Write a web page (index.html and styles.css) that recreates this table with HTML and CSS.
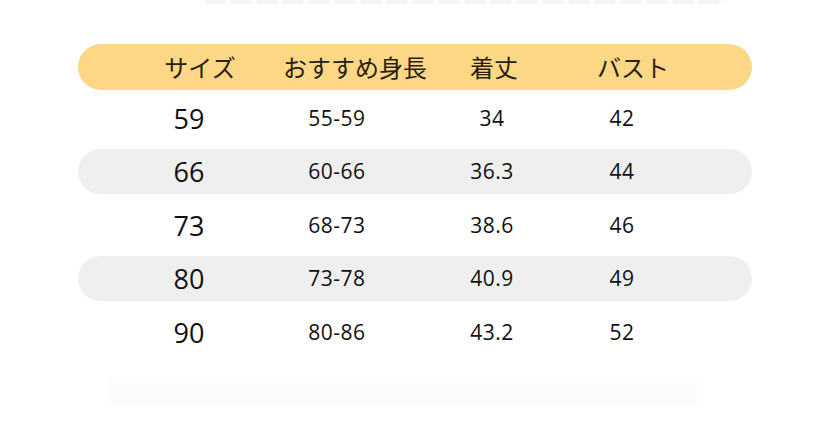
FILE: index.html
```html
<!DOCTYPE html>
<html lang="ja">
<head>
<meta charset="utf-8">
<link rel="stylesheet" href="styles.css">
</head>
<body>
<div class="page">
  <div class="top-strip"></div>
  <div class="table">
    <div class="head">
      <span class="h h1">サイズ</span>
      <span class="h h2">おすすめ身長</span>
      <span class="h h3">着丈</span>
      <span class="h h4">バスト</span>
    </div>
    <div class="rows">
      <div class="row"><span class="c c1">59</span><span class="c c2">55-59</span><span class="c c3">34</span><span class="c c4">42</span></div>
      <div class="row alt"><span class="c c1">66</span><span class="c c2">60-66</span><span class="c c3">36.3</span><span class="c c4">44</span></div>
      <div class="row"><span class="c c1">73</span><span class="c c2">68-73</span><span class="c c3">38.6</span><span class="c c4">46</span></div>
      <div class="row alt"><span class="c c1">80</span><span class="c c2">73-78</span><span class="c c3">40.9</span><span class="c c4">49</span></div>
      <div class="row"><span class="c c1">90</span><span class="c c2">80-86</span><span class="c c3">43.2</span><span class="c c4">52</span></div>
    </div>
  </div>
  <div class="bottom-box"></div>
</div>
</body>
</html>
```
FILE: styles.css
```css
html, body {
  margin: 0;
  padding: 0;
  background: #ffffff;
}
.page {
  width: 828px;
  height: 427px;
  overflow: hidden;
  display: flex;
  flex-direction: column;
}
.top-strip {
  margin-left: 205px;
  width: 520px;
  height: 4px;
  background: repeating-linear-gradient(90deg, #f5f5f5 0 20px, #fcfcfc 20px 26px);
}
.table {
  margin-top: 40px;
  margin-left: 78px;
  width: 674px;
}
.head {
  height: 46px;
  border-radius: 23px;
  background: #fbd786;
  display: flex;
  align-items: center;
}
.h {
  font-family: "Noto Sans CJK JP", sans-serif;
  font-size: 24px;
  font-weight: 400;
  color: #2a1f12;
  text-align: center;
  line-height: 1;
}
.h1 { width: 100px; margin-left: 72px; }
.h2 { width: 160px; margin-left: 25px; }
.h3 { width: 100px; margin-left: 9px; }
.h4 { width: 100px; margin-left: 39px; }
.rows {
  margin-top: 5.5px;
  display: flex;
  flex-direction: column;
  gap: 8.5px;
}
.row {
  height: 45px;
  border-radius: 22.5px;
  display: flex;
  align-items: center;
}
.row.alt {
  background: #efefef;
}
.c {
  font-family: "Open Sans", "Noto Sans", sans-serif;
  font-size: 21px;
  color: #111111;
  text-align: center;
  line-height: 1;
  width: 100px;
  letter-spacing: 0.5px;
}
.c1 { margin-left: 61px; font-size: 27px; letter-spacing: 0; }
.c2 { margin-left: 48px; }
.c3 { margin-left: 55px; }
.c4 { margin-left: 30px; }
.bottom-box {
  margin-top: 23px;
  margin-left: 107px;
  width: 590px;
  height: 27px;
  background: #fcfcfb;
}
```
